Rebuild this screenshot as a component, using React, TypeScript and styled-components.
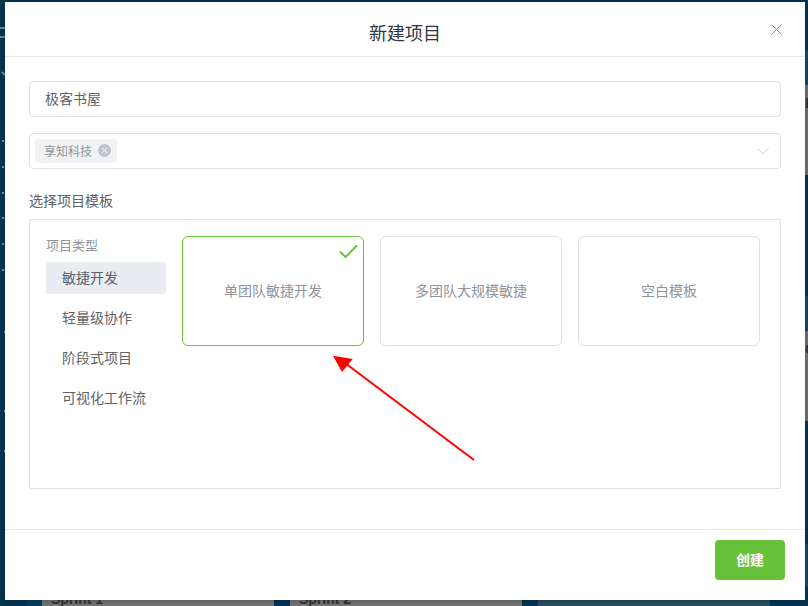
import styled, { createGlobalStyle } from "styled-components"

const GlobalStyle = createGlobalStyle`
    html, body {
        margin: 0;
        padding: 0;
    }
    body {
        width: 808px;
        height: 606px;
        overflow: hidden;
        font-family: "Liberation Sans", "Noto Sans CJK SC", sans-serif;
    }
    * {
        box-sizing: border-box;
    }
`

const projectTypes = ["敏捷开发", "轻量级协作", "阶段式项目", "可视化工作流"]
const templates = ["单团队敏捷开发", "多团队大规模敏捷", "空白模板"]
const railDots = [140, 166, 192, 217, 243, 269]
const railDotsLow = [331, 410, 450]

export default function App() {
    return (
        <Page>
            <GlobalStyle />
            <BackdropRail>
                <RailIcon />
                <RailChevron />
                {railDots.map(y => <RailDot key={y} $y={y} $x={2} />)}
                {railDotsLow.map(y => <RailDot key={y} $y={y} $x={4} />)}
            </BackdropRail>
            <SideCard $top={85}>P</SideCard>
            <SideCard $top={331}>C</SideCard>
            <SideLane />
            <SprintRow>
                <SprintCard>Sprint 1</SprintCard>
                <SprintCard>Sprint 2</SprintCard>
                <SprintLane />
            </SprintRow>

            <Modal>
                <ModalHeader>
                    <ModalTitle>新建项目</ModalTitle>
                    <CloseButton>
                        <svg width="11" height="11" viewBox="0 0 11 11">
                            <path d="M0.5 0.5L10.5 10.5M10.5 0.5L0.5 10.5" stroke="#8c8c96" strokeWidth="1" fill="none" />
                        </svg>
                    </CloseButton>
                </ModalHeader>
                <ModalBody>
                    <NameInput>极客书屋</NameInput>
                    <TeamSelect>
                        <Tag>
                            享知科技
                            <TagClose>
                                <svg width="7" height="7" viewBox="0 0 7 7">
                                    <path d="M1 1L6 6M6 1L1 6" stroke="#fff" strokeWidth="1" fill="none" />
                                </svg>
                            </TagClose>
                        </Tag>
                        <SelectArrow>
                            <svg width="12" height="7" viewBox="0 0 12 7">
                                <path d="M0.5 0.5L6 6L11.5 0.5" stroke="#c9cbd4" strokeWidth="1" fill="none" />
                            </svg>
                        </SelectArrow>
                    </TeamSelect>
                    <SectionLabel>选择项目模板</SectionLabel>
                    <TemplatePanel>
                        <TypeColumn>
                            <TypeHeading>项目类型</TypeHeading>
                            {projectTypes.map((name, i) => (
                                <TypeItem key={name} $active={i === 0}>{name}</TypeItem>
                            ))}
                        </TypeColumn>
                        <TemplateList>
                            {templates.map((name, i) => (
                                <TemplateCard key={name} $selected={i === 0}>
                                    {name}
                                    {i === 0 && (
                                        <CheckMark>
                                            <svg width="19" height="15" viewBox="0 0 19 15">
                                                <path d="M1 7.5L6.5 13L18 1.5" stroke="#67c23a" strokeWidth="2" fill="none" />
                                            </svg>
                                        </CheckMark>
                                    )}
                                </TemplateCard>
                            ))}
                        </TemplateList>
                    </TemplatePanel>
                </ModalBody>
                <ModalFooter>
                    <CreateButton>创建</CreateButton>
                </ModalFooter>
                <Annotation width="150" height="115" viewBox="0 0 150 115">
                    <line x1="141" y1="106" x2="12" y2="9" stroke="#ff0000" strokeWidth="2" />
                    <polygon points="0,1.7 19.7,5 9,18" fill="#ff0000" />
                </Annotation>
            </Modal>
        </Page>
    )
}

const Page = styled.div`
    position: relative;
    width: 808px;
    height: 606px;
    overflow: hidden;
    background-color: #04344f;
`

const BackdropRail = styled.div`
    position: absolute;
    top: 0;
    left: 0;
    width: 5px;
    height: 606px;
`

const RailIcon = styled.div`
    position: absolute;
    top: 27px;
    left: 0;
    width: 5px;
    height: 11px;
    border-top: 2px solid #6f7f8a;
    border-bottom: 2px solid #6f7f8a;
`

const RailChevron = styled.div`
    position: absolute;
    top: 73px;
    left: 1px;
    width: 6px;
    height: 2px;
    background-color: #7c8a94;
    transform: rotate(40deg);
`

const RailDot = styled.div<{ $x: number; $y: number }>`
    position: absolute;
    top: ${props => props.$y}px;
    left: ${props => props.$x}px;
    width: 2px;
    height: 2px;
    background-color: #7f8e98;
`

const SideCard = styled.div<{ $top: number }>`
    position: absolute;
    top: ${props => props.$top}px;
    left: 805px;
    width: 40px;
    height: 90px;
    padding-top: 10px;
    background-color: #6f6f6f;
    color: #333333;
    font-size: 14px;
    font-weight: bold;

    &::before {
        content: "";
        position: absolute;
        top: -35px;
        left: 0;
        width: 100%;
        height: 35px;
        background-color: #134763;
    }
`

const SideLane = styled.div`
    position: absolute;
    top: 544px;
    left: 805px;
    width: 3px;
    height: 43px;
    background-color: #134763;
`

const SprintRow = styled.div`
    position: absolute;
    top: 590px;
    left: 26px;
    padding-left: 16px;
    display: flex;
    gap: 16px;
    background: linear-gradient(#063a5c, #063a5c) no-repeat left / 16px 100%;
`

const SprintCard = styled.div`
    width: 232px;
    height: 40px;
    padding-left: 9px;
    background-color: #6f7173;
    color: #333333;
    font-size: 14px;
    font-weight: bold;
    line-height: 18px;
`

const SprintLane = styled.div`
    width: 232px;
    height: 40px;
    background-color: #2b4a60;
`

const Modal = styled.div`
    position: absolute;
    top: 2px;
    left: 5px;
    width: 800px;
    height: 598px;
    display: flex;
    flex-direction: column;
    background-color: #ffffff;
    box-shadow: 0 1px 4px rgba(0, 0, 0, 0.2);
`

const ModalHeader = styled.div`
    position: relative;
    flex: none;
    height: 55px;
    display: flex;
    align-items: center;
    justify-content: center;
    border-bottom: 1px solid #e8e8ee;
`

const ModalTitle = styled.div`
    padding-top: 5px;
    font-size: 18px;
    color: #33333f;
`

const CloseButton = styled.div`
    position: absolute;
    top: 22px;
    right: 23px;
    line-height: 0;
`

const ModalBody = styled.div`
    flex: 1;
    padding: 24px 24px 0;
    display: flex;
    flex-direction: column;
`

const NameInput = styled.div`
    height: 36px;
    padding-left: 15px;
    padding-bottom: 2px;
    display: flex;
    align-items: center;
    border: 1px solid #e0e0e8;
    border-radius: 4px;
    color: #606266;
    font-size: 14px;
`

const TeamSelect = styled.div`
    position: relative;
    height: 36px;
    margin-top: 16px;
    padding-left: 5px;
    display: flex;
    align-items: center;
    border: 1px solid #e0e0e8;
    border-radius: 4px;
`

const Tag = styled.div`
    height: 24px;
    padding: 0 6px 2px 9px;
    display: flex;
    align-items: center;
    gap: 6px;
    background-color: #f0f2f5;
    border-radius: 4px;
    color: #909399;
    font-size: 12px;
`

const TagClose = styled.span`
    width: 13px;
    height: 13px;
    display: flex;
    align-items: center;
    justify-content: center;
    background-color: #c0c4cc;
    border-radius: 50%;
`

const SelectArrow = styled.span`
    position: absolute;
    top: 14px;
    right: 11px;
    line-height: 0;
`

const SectionLabel = styled.div`
    margin-top: 22px;
    color: #606266;
    font-size: 14px;
    line-height: 20px;
`

const TemplatePanel = styled.div`
    height: 270px;
    margin-top: 8px;
    padding: 16px;
    display: flex;
    gap: 16px;
    border: 1px solid #e0e0e8;
    border-radius: 2px;
`

const TypeColumn = styled.div`
    width: 120px;
    flex: none;
    display: flex;
    flex-direction: column;
`

const TypeHeading = styled.div`
    height: 18px;
    color: #909399;
    font-size: 13px;
    line-height: 20px;
`

const TypeItem = styled.div<{ $active?: boolean }>`
    height: 32px;
    margin-top: ${props => props.$active ? "8px" : "0"};
    margin-bottom: 8px;
    padding-left: 16px;
    padding-bottom: 2px;
    display: flex;
    align-items: center;
    border-radius: 3px;
    background-color: ${props => props.$active ? "#e9ecf3" : "transparent"};
    color: #606266;
    font-size: 14px;
`

const TemplateList = styled.div`
    display: flex;
    gap: 16px;
`

const TemplateCard = styled.div<{ $selected?: boolean }>`
    position: relative;
    width: 182px;
    height: 110px;
    padding-bottom: 2px;
    display: flex;
    align-items: center;
    justify-content: center;
    border: 1px solid ${props => props.$selected ? "#67c23a" : "#e0e0e8"};
    border-radius: 6px;
    color: #909399;
    font-size: 14px;
`

const CheckMark = styled.span`
    position: absolute;
    top: 7px;
    right: 5px;
    line-height: 0;
`

const ModalFooter = styled.div`
    flex: none;
    height: 71px;
    padding: 10px 20px 0 0;
    display: flex;
    justify-content: flex-end;
    border-top: 1px solid #e8e8ee;
`

const CreateButton = styled.div`
    width: 70px;
    height: 40px;
    padding-bottom: 2px;
    display: flex;
    align-items: center;
    justify-content: center;
    background-color: #67c23a;
    border-radius: 4px;
    color: #ffffff;
    font-size: 14px;
    font-weight: bold;
`

const Annotation = styled.svg`
    position: absolute;
    top: 352px;
    left: 328px;
`
